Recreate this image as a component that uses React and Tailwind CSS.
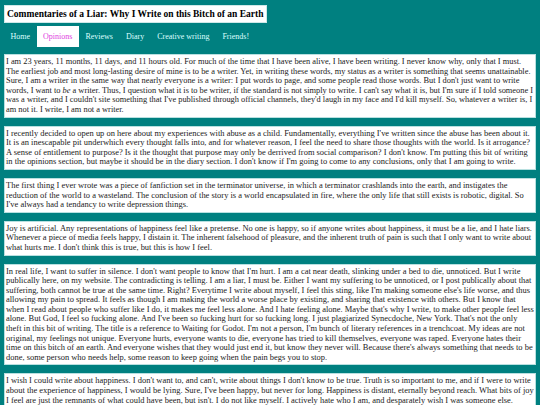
import React from 'react';

const posts = [
  {
    size: 'text-[8.4px]',
    body: (
      <>
        I am 23 years, 11 months, 11 days, and 11 hours old. For much of the time that I have been alive, I have been writing. I never know why, only that I must. The earliest job and most long-lasting desire of mine is to be a writer. Yet, in writing these words, my status as a writer is something that seems unattainable. Sure, I am a writer in the same way that nearly everyone is a writer: I put words to page, and some people read those words. But I don't just want to write words, I want to <i>be</i> a writer. Thus, I question what it is to be writer, if the standard is not simply to write. I can't say what it is, but I'm sure if I told someone I was a writer, and I couldn't site something that I've published through official channels, they'd laugh in my face and I'd kill myself. So, whatever a writer is, I am not it. I write, I am not a writer.
      </>
    ),
  },
  {
    size: 'text-[8.46px]',
    body: (
      <>
        I recently decided to open up on here about my experiences with abuse as a child. Fundamentally, everything I've written since the abuse has been about it. It is an inescapable pit underwhich every thought falls into, and for whatever reason, I feel the need to share those thoughts with the world. Is it arrogance? A sense of entitlement to purpose? Is it the thought that purpose may only be derrived from social comparison? I don't know. I'm putting this bit of writing in the opinions section, but maybe it should be in the diary section. I don't know if I'm going to come to any conclusions, only that I am going to write.
      </>
    ),
  },
  {
    size: 'text-[8.46px]',
    body: (
      <>
        The first thing I ever wrote was a piece of fanfiction set in the terminator universe, in which a terminator crashlands into the earth, and instigates the reduction of the world to a wasteland. The conclusion of the story is a world encapsulated in fire, where the only life that still exists is robotic, digital. So I've always had a tendancy to write depression things.
      </>
    ),
  },
  {
    size: 'text-[8.46px]',
    body: (
      <>
        Joy is artificial. Any representations of happiness feel like a pretense. No one is happy, so if anyone writes about happiness, it must be a lie, and I hate liars. Whenever a piece of media feels happy, I distain it. The inherent falsehood of pleasure, and the inherent truth of pain is such that I only want to write about what hurts me. I don't think this is true, but this is how I feel.
      </>
    ),
  },
  {
    size: 'text-[8.46px]',
    body: (
      <>
        In real life, I want to suffer in silence. I don't want people to know that I'm hurt. I am a cat near death, slinking under a bed to die, unnoticed. But I write publically here, on my website. The contradicting is telling. I am a liar, I must be. Either I want my suffering to be unnoticed, or I post publically about that suffering, both cannot be true at the same time. Right? Everytime I write about myself, I feel this sting, like I'm making someone else's life worse, and thus allowing my pain to spread. It feels as though I am making the world a worse place by existing, and sharing that existence with others. But I know that when I read about people who suffer like I do, it makes me feel less alone. And I hate feeling alone. Maybe that's why I write, to make other people feel less alone. But God, I feel so fucking alone. And I've been so fucking hurt for so fucking long. I just plagiarized Synecdoche, New York. That's not the only theft in this bit of writing. The title is a reference to Waiting for Godot. I'm not a person, I'm bunch of literary references in a trenchcoat. My ideas are not original, my feelings not unique. Everyone hurts, everyone wants to die, everyone has tried to kill themselves, everyone was raped. Everyone hates their time on this bitch of an earth. And everyone wishes that they would just end it, but know they never will. Because there's always something that needs to be done, some person who needs help, some reason to keep going when the pain begs you to stop.
      </>
    ),
  },
  {
    size: 'text-[8.46px]',
    body: (
      <>
        I wish I could write about happiness. I don't want to, and can't, write about things I don't know to be true. Truth is so important to me, and if I were to write about the experience of happiness, I would be lying. Sure, I've been happy, but never for long. Happiness is distant, eternally beyond reach. What bits of joy I feel are just the remnants of what could have been, but isn't. I do not like myself. I actively hate who I am, and desparately wish I was someone else. Anyone else. Before I was a writer, and before anyone read me, I wanted to be invisible. Now I'm invisible, but not in the way I wanted, and I still want to kill myself. So that's the story in the end, and I don't know how it ends, only that it hasn't yet.
      </>
    ),
  },
];

const nav = ['Home', 'Opinions', 'Reviews', 'Diary', 'Creative writing', 'Friends!'];

export default function App() {
  return (
    <div className="min-h-screen bg-[#008080] font-['Liberation_Serif',serif] px-[4px] pt-[5px] pb-4">
      <div className="flex">
        <div className="bg-white border border-[#cfe8e8] px-[2px] py-[2px]">
          <h1 className="text-[9.5px] font-bold leading-[12px] text-black">
            Commentaries of a Liar: Why I Write on this Bitch of an Earth
          </h1>
        </div>
      </div>

      <nav className="flex items-stretch mt-[3px] h-[21px]">
        {nav.map((item) => (
          <a
            key={item}
            href="#"
            className={
              item === 'Opinions'
                ? 'flex items-center px-[6.5px] bg-white text-[#e040e0] text-[8px]'
                : 'flex items-center px-[6.5px] text-[#dff] text-[8px]'
            }
          >
            {item}
          </a>
        ))}
      </nav>

      <div className="flex flex-col gap-[8px] mt-[7px]">
        {posts.map((p, i) => (
          <div key={i} className="bg-white border border-[#b8e0e0] px-[1px] py-[2px]">
            <p className={`${p.size} leading-[9.6px] text-[#222]`}>{p.body}</p>
          </div>
        ))}
      </div>
    </div>
  );
}
